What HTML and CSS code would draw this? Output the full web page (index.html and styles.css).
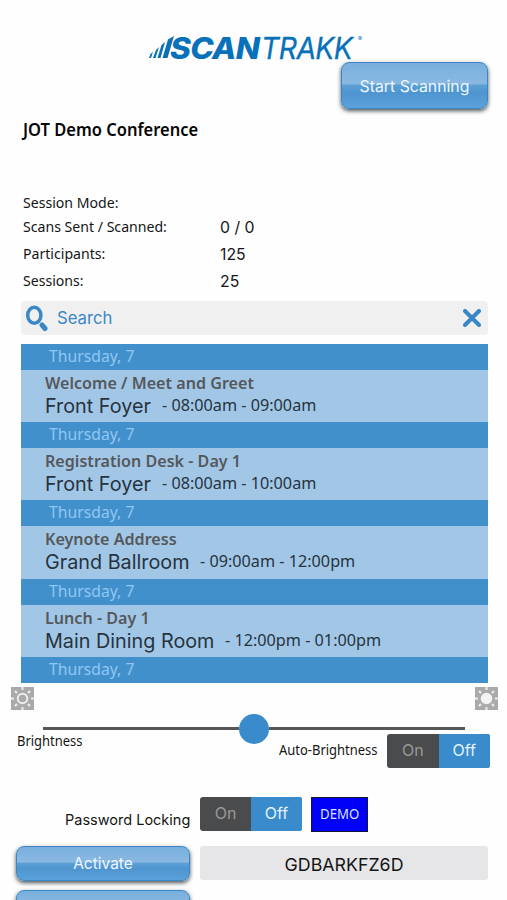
FILE: index.html
```html
<!DOCTYPE html>
<html lang="en">
<head>
<meta charset="utf-8">
<title>ScanTrakk</title>
<link rel="stylesheet" href="styles.css">
</head>
<body>
<main class="app">
  <header class="header">
    <div class="logo">
      <svg class="logo-mark" viewBox="0 0 25 23" width="25" height="23"><path d="M0 22 1.5 18 4 16 2 22ZM4 22 7 14 10 11 6.500 22ZM8.500 22 12.500 9 16 6 11.500 22ZM13.500 22 19 3.500 25 0 18.500 22Z"/></svg>
      <span class="logo-text"><b>SCAN</b><span class="logo-light">TRAKK</span></span><span class="logo-reg">®</span>
    </div>
    <button class="glossy start">Start Scanning</button>
  </header>
  <h1 class="title"><span class="fit">JOT Demo Conference</span></h1>
  <dl class="stats">
    <dt><span class="fit">Session Mode:</span></dt><dd></dd>
    <dt><span class="fit">Scans Sent / Scanned:</span></dt><dd>0 / 0</dd>
    <dt><span class="fit">Participants:</span></dt><dd>125</dd>
    <dt><span class="fit">Sessions:</span></dt><dd>25</dd>
  </dl>
  <div class="search">
    <svg class="search-icon" viewBox="0 0 24 28" width="24" height="28"><ellipse cx="9.3" cy="11.2" rx="6.6" ry="8"/><path d="m17 21 3 3.500"/></svg>
    <span class="search-text">Search</span>
    <svg class="clear-icon" viewBox="0 0 18 18" width="18" height="18"><path d="m2 2 14 14M16 2 2 16"/></svg>
  </div>
  <section class="sessions">
    <div class="day"><span class="fit">Thursday, 7</span></div>
    <article class="session"><h2><span class="fit">Welcome / Meet and Greet</span></h2><p><span class="room">Front Foyer</span><span class="time fit">- 08:00am - 09:00am</span></p></article>
    <div class="day"><span class="fit">Thursday, 7</span></div>
    <article class="session"><h2><span class="fit">Registration Desk - Day 1</span></h2><p><span class="room">Front Foyer</span><span class="time fit">- 08:00am - 10:00am</span></p></article>
    <div class="day"><span class="fit">Thursday, 7</span></div>
    <article class="session"><h2><span class="fit">Keynote Address</span></h2><p><span class="room">Grand Ballroom</span><span class="time fit">- 09:00am - 12:00pm</span></p></article>
    <div class="day"><span class="fit">Thursday, 7</span></div>
    <article class="session"><h2><span class="fit">Lunch - Day 1</span></h2><p><span class="room">Main Dining Room</span><span class="time fit">- 12:00pm - 01:00pm</span></p></article>
    <div class="day"><span class="fit">Thursday, 7</span></div>
  </section>
  <div class="suns">
    <svg class="sun" viewBox="0 0 23 23" width="23" height="23"><path class="sun-bg" d="M0 0h23v23H0z"/><circle class="ring" cx="11.5" cy="11.5" r="4.8"/><path class="rays" d="M11.5 0v3M11.5 20v3M0 11.5h3M20 11.5h3M4 4l2 2M19 4l-2 2M4 19l2-2M19 19l-2-2"/></svg>
    <svg class="sun" viewBox="0 0 23 23" width="23" height="23"><path class="sun-bg" d="M0 0h23v23H0z"/><circle class="disc" cx="11.5" cy="11.5" r="5.8"/><path class="rays" d="M11.5 0v3M11.5 20v3M0 11.5h3M20 11.5h3M4 4l2 2M19 4l-2 2M4 19l2-2M19 19l-2-2"/></svg>
  </div>
  <div class="slider"><i class="track"></i><i class="thumb"></i><i class="track"></i></div>
  <div class="bright">
    <span class="bright-label"><span class="fit">Brightness</span></span>
    <span class="auto-label"><span class="fit">Auto-Brightness</span></span>
    <div class="toggle auto"><span>On</span><span class="on">Off</span></div>
  </div>
  <div class="lock">
    <span class="lock-label">Password Locking</span>
    <div class="toggle"><span>On</span><span class="on">Off</span></div>
    <span class="demo"><span class="fit">DEMO</span></span>
  </div>
  <div class="activate-row">
    <button class="glossy activate">Activate</button>
    <div class="code">GDBARKFZ6D</div>
  </div>
  <button class="glossy next" aria-label="More"></button>
</main>
</body>
</html>
```
FILE: styles.css
```css
* { box-sizing: border-box; }
body { margin: 0; background: #fefefe; color: #151515; font-family: Inter, sans-serif; }
.app { width: 507px; height: 900px; overflow: hidden; display: flex; flex-direction: column; }
.app > * { flex-shrink: 0; }
svg { display: block; }
.fit { display: inline-block; white-space: nowrap; font-family: "Noto Sans", sans-serif; transform: scaleX(.94); transform-origin: left center; }

.header { height: 115px; padding: 36px 19px 0 149px; display: flex; flex-direction: column; }
.logo { display: flex; height: 26px; color: #0871b9; }
.logo-mark { fill: #0871b9; }
.logo-text { display: flex; font: italic 29.5px/24px Inter, sans-serif; white-space: nowrap; margin-left: -4px; letter-spacing: -.6px; }
.logo-text b { width: 91px; font-weight: 800; transform: scaleX(1.07); transform-origin: left center; }
.logo-light { width: 97px; transform: scaleX(.96); transform-origin: left center; -webkit-text-stroke: .3px #0871b9; }
.logo-reg { font-size: 6px; line-height: 6px; }
.glossy { border: 1.5px solid #3c87c1; border-radius: 8px; color: #eff7ff; font: 15.5px/1 Inter, sans-serif; padding: 0; background: linear-gradient(#78afde, #8ab9e2 45%, #5b9fd5 50%, #4e95d0 65%, #5ba2db); box-shadow: 0 2px 4px #4c5358; }
.start { width: 147px; height: 47px; align-self: flex-end; font-size: 15.8px; padding-top: 3px; }

.title { margin: 0 0 0 23px; height: 30px; font-size: 17px; line-height: 30px; font-weight: 600; color: #050505; }
.title .fit { transform: scaleX(.97); }
.stats { margin: 46px 0 0 23px; display: grid; grid-template-columns: 197px 1fr; grid-template-rows: 22px 27px 27px 27px; font-size: 15px; align-items: center; }
.stats dt { line-height: 22px; }
.stats dd { margin: 0; padding-top: 1px; font-size: 15.8px; }

.search { margin: 7px 19px 0 21px; height: 34px; background: #f0f0f0; border-radius: 4px; display: flex; align-items: center; padding: 0 7px 0 4px; color: #3a87c8; }
.search svg { fill: none; stroke: #3a87c8; }
.search-icon { stroke-width: 3.5; }
.search-icon path { stroke-width: 5; stroke-linecap: round; }
.clear-icon { stroke-width: 4; stroke-linecap: round; margin-left: auto; }
.search-text { margin-left: 8px; font-size: 16.7px; }

.sessions { margin: 9px 19px 0 21px; }
.day { height: 26px; padding-left: 28px; background: #4190cc; color: #91c7f2; font-size: 17px; line-height: 23px; }
.day .fit { transform: scaleX(.925); }
.session { height: 52.2px; padding: 1px 0 0 24px; background: #a2c7e6; color: #26333f; }
.session h2 { margin: 0; font-size: 16.5px; line-height: 23px; height: 23px; font-weight: 600; color: #55585b; }
.session h2 .fit { transform: scaleX(.976); }
.session p { margin: 0; display: flex; line-height: 25px; }
.room { font-size: 19.8px; }
.time { font-size: 17px; margin-left: 11px; line-height: 21px; }
.session .time { transform: scaleX(.953); }

.suns { display: flex; justify-content: space-between; margin-top: 4px; padding: 0 9px 0 11px; }
.sun-bg { fill: #aaa; }
.ring { fill: none; stroke: #eee; stroke-width: 2; }
.disc { fill: #f3f3f3; }
.rays { fill: none; stroke: #eee; stroke-width: 2; }
.slider { height: 30px; margin: 4px 42px 0 43px; display: flex; align-items: center; }
.track { flex: 1; height: 3px; background: #555856; }
.thumb { width: 30px; height: 30px; border-radius: 50%; background: #3a8bcb; }
.bright { height: 35px; margin-top: -10px; padding-left: 17px; display: flex; font-size: 13.5px; color: #151515; }
.bright .fit { transform: scaleX(.96); }
.bright-label { width: 262px; line-height: 14px; }
.auto-label { width: 108px; line-height: 32px; }
.toggle { width: 103px; height: 34px; display: flex; border-radius: 3px; overflow: hidden; background: #4a4b4c; color: #999; font-size: 16px; line-height: 33px; text-align: center; }
.toggle span { flex: 1; }
.toggle .on { background: #3a8bcb; color: #e4f2ff; }
.lock { height: 35px; margin-top: 28px; display: flex; }
.lock-label { width: 200px; padding: 7px 0 0 65px; font-size: 14.5px; line-height: 32px; white-space: nowrap; }
.lock .toggle { width: 102px; }
.demo { width: 57px; height: 35px; margin-left: 9px; background: #0000f8; border: 1px solid #141435; color: #d9e5ff; font-size: 15px; line-height: 31px; padding-left: 8px; }
.demo .fit { transform: scaleX(.88); }
.activate-row { margin: 14px 19px 0 16px; display: flex; gap: 10px; height: 35px; }
.activate { width: 174px; }
.code { flex: 1; height: 34px; background: #e6e6e8; border-radius: 3px; text-align: center; font-size: 17.8px; line-height: 37px; }
.next { width: 174px; height: 35px; margin: 9px 0 0 16px; }
```
